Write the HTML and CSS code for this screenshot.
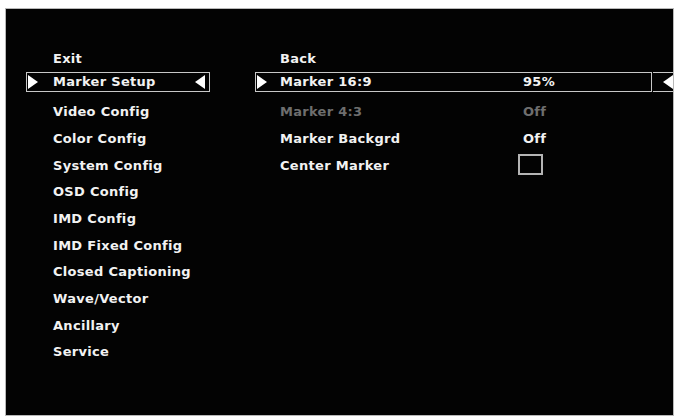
FILE: index.html
```html
<!DOCTYPE html>
<html>
<head>
<meta charset="utf-8">
<link rel="stylesheet" href="styles.css">
</head>
<body>
<div class="screen">
  <div class="col left">
    <div class="item"><span class="label">Exit</span></div>
    <div class="item sel-row">
      <div class="selbox">
        <svg class="arr" width="10" height="14" viewBox="0 0 10 14"><polygon points="0,0 10,7 0,14" fill="#fff"/></svg>
        <span class="label-in">Marker Setup</span>
        <svg class="arr arr-r" width="10" height="14" viewBox="0 0 10 14"><polygon points="10,0 0,7 10,14" fill="#fff"/></svg>
      </div>
    </div>
    <div class="item"><span class="label">Video Config</span></div>
    <div class="item"><span class="label">Color Config</span></div>
    <div class="item"><span class="label">System Config</span></div>
    <div class="item"><span class="label">OSD Config</span></div>
    <div class="item"><span class="label">IMD Config</span></div>
    <div class="item"><span class="label">IMD Fixed Config</span></div>
    <div class="item"><span class="label">Closed Captioning</span></div>
    <div class="item"><span class="label">Wave/Vector</span></div>
    <div class="item"><span class="label">Ancillary</span></div>
    <div class="item"><span class="label">Service</span></div>
  </div>
  <div class="col right">
    <div class="item"><span class="label rlabel">Back</span></div>
    <div class="item sel-row">
      <div class="selbox wide">
        <svg class="arr" width="10" height="14" viewBox="0 0 10 14"><polygon points="0,0 10,7 0,14" fill="#fff"/></svg>
        <span class="label-in rlabel-in">Marker 16:9</span>
        <span class="value">95%</span>
      </div>
      <div class="selend">
        <svg class="arr" width="10" height="14" viewBox="0 0 10 14"><polygon points="10,0 0,7 10,14" fill="#fff"/></svg>
      </div>
    </div>
    <div class="item dim"><span class="label rlabel">Marker 4:3</span><span class="value">Off</span></div>
    <div class="item"><span class="label rlabel">Marker Backgrd</span><span class="value">Off</span></div>
    <div class="item"><span class="label rlabel">Center Marker</span><span class="check"></span></div>
  </div>
</div>
</body>
</html>
```
FILE: styles.css
```css
html, body {
  margin: 0;
  padding: 0;
  background: #fff;
}
body {
  font-family: "DejaVu Sans", Verdana, sans-serif;
  font-weight: bold;
  font-size: 13px;
  letter-spacing: 0.3px;
  color: #f2f2f2;
}
.screen {
  margin: 8px 0 0 5px;
  width: 667px;
  height: 406px;
  background: #030303;
  border: 1px solid #b8b8b8;
  display: flex;
  padding-top: 36px;
  box-sizing: content-box;
  height: 370px;
}
.col {
  display: flex;
  flex-direction: column;
}
.left {
  width: 184px;
  margin-left: 20px;
}
.right {
  margin-left: 45px;
  width: 418px;
}
.item {
  height: 26.7px;
  display: flex;
  align-items: center;
  white-space: nowrap;
}
.label {
  padding-left: 27px;
}
.rlabel {
  padding-left: 25px;
  width: 243px;
}
.sel-row {
  align-items: flex-start;
}
.selbox {
  box-sizing: border-box;
  width: 184px;
  height: 20px;
  border: 1px solid #c8c8c8;
  display: flex;
  align-items: center;
  padding-left: 1px;
}
.selbox.wide {
  width: 397px;
}
.arr {
  display: block;
  flex: none;
}
.arr-r {
  margin-left: auto;
  margin-right: 4px;
}
.label-in {
  margin-left: 15px;
}
.rlabel-in {
  margin-left: 13px;
  width: 243px;
}
.selend {
  box-sizing: border-box;
  margin-left: 1px;
  width: 20px;
  height: 20px;
  border-top: 1px solid #c8c8c8;
  border-bottom: 1px solid #c8c8c8;
  display: flex;
  align-items: center;
  justify-content: flex-end;
}
.value {
  flex: none;
}
.dim {
  color: #6e6e6e;
}
.check {
  display: block;
  box-sizing: border-box;
  width: 25px;
  height: 21px;
  border: 2px solid #b4b4b4;
  margin-left: -5px;
  margin-top: -1px;
}
```
